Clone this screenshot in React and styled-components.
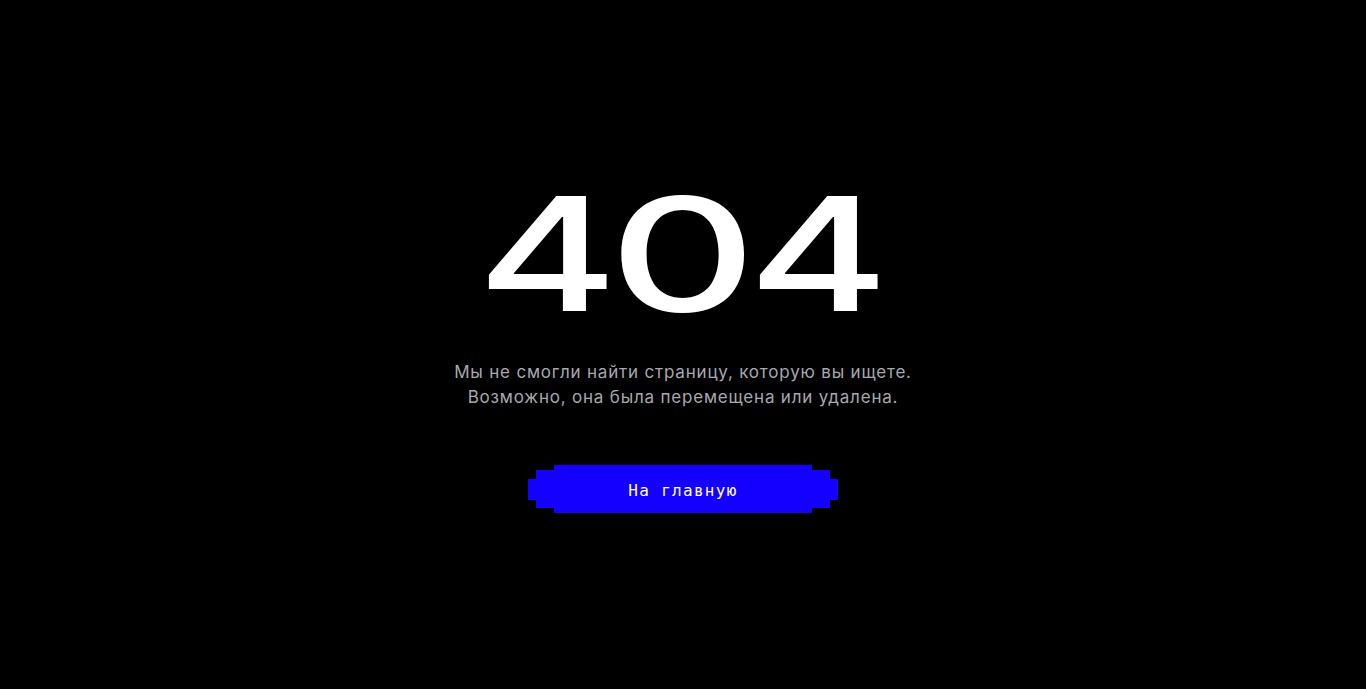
import styled, { createGlobalStyle } from "styled-components";

const GlobalStyle = createGlobalStyle`
 html, body {
  margin: 0;
  padding: 0;
  background: #000;
 }
`;

const Page = styled.main`
 min-height: 100vh;
 box-sizing: border-box;
 padding-bottom: 6px;
 display: flex;
 flex-direction: column;
 align-items: center;
 justify-content: center;
 background: #000;
`;

const Code = styled.h1`
 margin: 0;
 height: 175px;
 font-family: Inter, "Noto Sans", sans-serif;
 font-weight: 450;
 font-size: 158px;
 line-height: 167px;
 color: #fff;
 display: flex;
 align-items: flex-start;
 gap: 12px;
`;

// each glyph is stretched sideways; the margin keeps the stretched box at its width
const Digit = styled.span`
 display: inline-flex;
 justify-content: center;
 width: ${(props) => props.$w / props.$scale}px;
 margin: 0 ${(props) => (props.$w - props.$w / props.$scale) / 2}px;
 transform: scaleX(${(props) => props.$scale});
`;

const Message = styled.p`
 margin: 15px 0 0;
 font-family: Inter, "Noto Sans", sans-serif;
 font-size: 17px;
 letter-spacing: 0.8px;
 line-height: 25px;
 color: #a6a8b1;
 text-align: center;
`;

const HomeButton = styled.a`
 margin-top: 55px;
 width: 310px;
 height: 48px;
 box-sizing: border-box;
 padding-top: 2px;
 display: flex;
 align-items: center;
 justify-content: center;
 background: #1400ff;
 color: #fff;
 font-family: "DejaVu Sans Mono", "Liberation Mono", monospace;
 font-size: 16px;
 letter-spacing: 1.3px;
 text-decoration: none;
 cursor: pointer;
 clip-path: polygon(
  26px 0, 284px 0, 284px 5px, 302px 5px, 302px 14px, 310px 14px,
  310px 35px, 302px 35px, 302px 43px, 284px 43px, 284px 48px,
  26px 48px, 26px 43px, 8px 43px, 8px 35px, 0 35px, 0 14px,
  8px 14px, 8px 5px, 26px 5px
 );
`;

export default function App() {
 return (
  <>
   <GlobalStyle />
   <Page>
    <Code aria-label="404">
     <Digit $w={121} $scale={1.36}>4</Digit>
     <Digit $w={127} $scale={1.45}>0</Digit>
     <Digit $w={121} $scale={1.36}>4</Digit>
    </Code>
    <Message>
     Мы не смогли найти страницу, которую вы ищете.
     <br />
     Возможно, она была перемещена или удалена.
    </Message>
    <HomeButton href="#">На главную</HomeButton>
   </Page>
  </>
 );
}
